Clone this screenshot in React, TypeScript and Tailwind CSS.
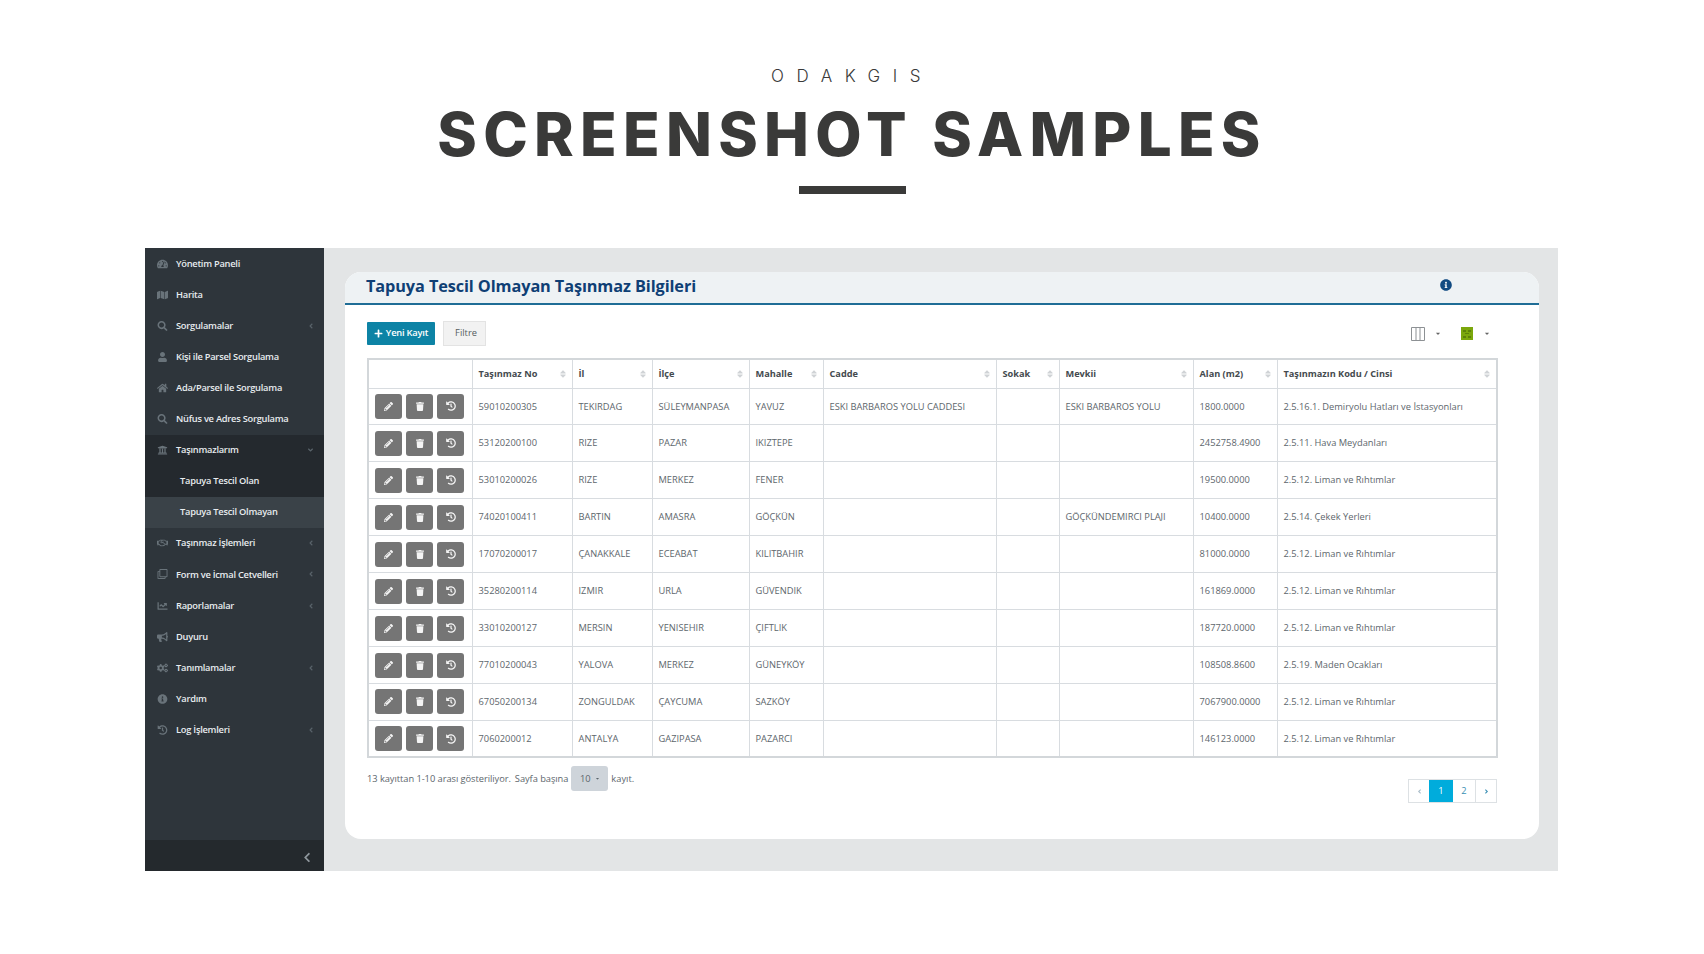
import {
  FaBullhorn,
  FaCaretDown,
  FaChartLine,
  FaChevronLeft,
  FaCogs,
  FaHistory,
  FaHome,
  FaInfoCircle,
  FaMap,
  FaPencilAlt,
  FaPlus,
  FaRegClone,
  FaRegHandshake,
  FaSearch,
  FaSort,
  FaTachometerAlt,
  FaTrash,
  FaUniversity,
  FaUser,
  FaAngleLeft,
  FaAngleDown,
  FaAngleRight,
} from "react-icons/fa";

const menu = [
  { label: "Yönetim Paneli", icon: FaTachometerAlt },
  { label: "Harita", icon: FaMap },
  { label: "Sorgulamalar", icon: FaSearch, arrow: true },
  { label: "Kişi ile Parsel Sorgulama", icon: FaUser },
  { label: "Ada/Parsel ile Sorgulama", icon: FaHome },
  { label: "Nüfus ve Adres Sorgulama", icon: FaSearch },
];

const menuBottom = [
  { label: "Taşınmaz İşlemleri", icon: FaRegHandshake, arrow: true },
  { label: "Form ve İcmal Cetvelleri", icon: FaRegClone, arrow: true },
  { label: "Raporlamalar", icon: FaChartLine, arrow: true },
  { label: "Duyuru", icon: FaBullhorn },
  { label: "Tanımlamalar", icon: FaCogs, arrow: true },
  { label: "Yardım", icon: FaInfoCircle },
  { label: "Log İşlemleri", icon: FaHistory, arrow: true },
];

const columns = [
  { label: "", width: "w-[104px]" },
  { label: "Taşınmaz No", width: "w-[100px]" },
  { label: "İl", width: "w-[80px]" },
  { label: "İlçe", width: "w-[97px]" },
  { label: "Mahalle", width: "w-[74px]" },
  { label: "Cadde", width: "w-[173px]" },
  { label: "Sokak", width: "w-[63px]" },
  { label: "Mevkii", width: "w-[134px]" },
  { label: "Alan (m2)", width: "w-[84px]" },
  { label: "Taşınmazın Kodu / Cinsi", width: "w-[220px]" },
];

const rows = [
  ["59010200305", "TEKIRDAG", "SÜLEYMANPASA", "YAVUZ", "ESKI BARBAROS YOLU CADDESI", "", "ESKI BARBAROS YOLU", "1800.0000", "2.5.16.1. Demiryolu Hatları ve İstasyonları"],
  ["53120200100", "RIZE", "PAZAR", "IKIZTEPE", "", "", "", "2452758.4900", "2.5.11. Hava Meydanları"],
  ["53010200026", "RIZE", "MERKEZ", "FENER", "", "", "", "19500.0000", "2.5.12. Liman ve Rıhtımlar"],
  ["74020100411", "BARTIN", "AMASRA", "GÖÇKÜN", "", "", "GÖÇKÜNDEMIRCI PLAJI", "10400.0000", "2.5.14. Çekek Yerleri"],
  ["17070200017", "ÇANAKKALE", "ECEABAT", "KILITBAHIR", "", "", "", "81000.0000", "2.5.12. Liman ve Rıhtımlar"],
  ["35280200114", "IZMIR", "URLA", "GÜVENDIK", "", "", "", "161869.0000", "2.5.12. Liman ve Rıhtımlar"],
  ["33010200127", "MERSIN", "YENISEHIR", "ÇIFTLIK", "", "", "", "187720.0000", "2.5.12. Liman ve Rıhtımlar"],
  ["77010200043", "YALOVA", "MERKEZ", "GÜNEYKÖY", "", "", "", "108508.8600", "2.5.19. Maden Ocakları"],
  ["67050200134", "ZONGULDAK", "ÇAYCUMA", "SAZKÖY", "", "", "", "7067900.0000", "2.5.12. Liman ve Rıhtımlar"],
  ["7060200012", "ANTALYA", "GAZIPASA", "PAZARCI", "", "", "", "146123.0000", "2.5.12. Liman ve Rıhtımlar"],
];

function MenuItem({ label, icon: Icon, arrow }: { label: string; icon: React.ComponentType<{ className?: string }>; arrow?: boolean }) {
  return (
    <div className="flex h-[31.1px] items-center pl-[12px] pr-[10px] text-[#e8ecef]">
      <span className="flex w-[19px] shrink-0 items-center">
        <Icon className="h-[10px] w-[11px] text-[#69737a]" />
      </span>
      <span className="flex-1 text-[9.3px] font-semibold tracking-[-0.25px]">{label}</span>
      {arrow && <FaAngleLeft className="h-[8px] w-[6px] text-[#59636a]" />}
    </div>
  );
}

function Sidebar() {
  return (
    <aside className="flex w-[179px] shrink-0 flex-col bg-[#2e353b]">
      <div className="flex-1">
        {menu.map((item) => (
          <MenuItem key={item.label} {...item} />
        ))}
        <div className="flex h-[31.1px] items-center bg-[#24292e] pl-[12px] pr-[10px] text-[#e8ecef]">
          <span className="flex w-[19px] shrink-0 items-center">
            <FaUniversity className="h-[10px] w-[11px] text-[#69737a]" />
          </span>
          <span className="flex-1 text-[9.3px] font-semibold tracking-[-0.25px]">Taşınmazlarım</span>
          <FaAngleDown className="h-[8px] w-[7px] text-[#59636a]" />
        </div>
        <div className="flex h-[31.1px] items-center bg-[#24292e] pl-[35px] text-[9.3px] font-semibold tracking-[-0.25px] text-[#e8ecef]">
          Tapuya Tescil Olan
        </div>
        <div className="flex h-[31.1px] items-center bg-[#3a4248] pl-[35px] text-[9.3px] font-semibold tracking-[-0.25px] text-[#e8ecef]">
          Tapuya Tescil Olmayan
        </div>
        {menuBottom.map((item) => (
          <MenuItem key={item.label} {...item} />
        ))}
      </div>
      <div className="flex h-[31px] items-center justify-end bg-[#24292d] pt-[3px] pr-[13px]">
        <FaChevronLeft className="h-[11px] w-[8px] text-[#8f979d]" />
      </div>
    </aside>
  );
}

function RowButton({ children }: { children: React.ReactNode }) {
  return (
    <span className="flex h-[25px] w-[27px] items-center justify-center rounded-[3px] bg-[#757575] text-[#f4f4f4]">
      {children}
    </span>
  );
}

function DataTable() {
  return (
    <table className="w-[1129px] table-fixed border-collapse border-2 border-[#d3d7da] text-[9.3px] text-[#5d666c]">
      <colgroup>
        {columns.map((c) => (
          <col key={c.label} className={c.width} />
        ))}
      </colgroup>
      <thead>
        <tr className="h-[29px]">
          {columns.map((c) => (
            <th key={c.label} className="border border-[#d8dce0] px-[6px] text-left text-[9.2px] font-bold text-[#444a4e]">
              {c.label && (
                <span className="flex items-center justify-between">
                  {c.label}
                  <FaSort className="h-[10px] w-[6px] text-[#d0d3d6]" />
                </span>
              )}
            </th>
          ))}
        </tr>
      </thead>
      <tbody>
        {rows.map((row) => (
          <tr key={row[0]} className="h-[36.95px]">
            <td className="border border-[#d8dce0] pl-[6px]">
              <span className="flex gap-[4px]">
                <RowButton>
                  <FaPencilAlt className="h-[9px] w-[9px]" />
                </RowButton>
                <RowButton>
                  <FaTrash className="h-[9px] w-[8px]" />
                </RowButton>
                <RowButton>
                  <FaHistory className="h-[10px] w-[10px]" />
                </RowButton>
              </span>
            </td>
            {row.map((cell, i) => (
              <td key={i} className="truncate border border-[#d8dce0] px-[6px]">
                {cell}
              </td>
            ))}
          </tr>
        ))}
      </tbody>
    </table>
  );
}

function ExcelIcon() {
  return (
    <svg viewBox="0 0 12 13" className="h-[13px] w-[12px]">
      <rect width="12" height="13" fill="#7ba70c" />
      <path d="M2 3h3v2H2zM7 3h3v2H7zM4 6h4v1H4zM2 9h3v2H2zM7 9h3v2H7z" fill="#5d8208" />
    </svg>
  );
}

export default function App() {
  return (
    <div className="min-h-[954px] bg-white font-['Open_Sans',sans-serif]">
      <header className="flex h-[248px] flex-col items-center pt-[66px]">
        <p className="font-['Inter',sans-serif] text-[17px] leading-[20px] font-light tracking-[12.5px] text-[#3a3a3a]">
          ODAKGIS
        </p>
        <h1 className="mt-[13px] font-['Inter',sans-serif] text-[60px] leading-[70px] font-extrabold tracking-[6.3px] text-[#3a3a39]">
          SCREENSHOT SAMPLES
        </h1>
        <div className="mt-[17px] h-[8px] w-[107px] bg-[#3a3a39]" />
      </header>

      <div className="mr-[146px] ml-[145px] flex h-[623px]">
        <Sidebar />
        <main className="flex-1 bg-[#e3e5e6] pt-[24px] pr-[19px] pl-[21px]">
          <section className="h-[567px] rounded-[16px] bg-white">
            <div className="flex h-[33px] items-center justify-between rounded-t-[16px] border-b-2 border-[#1f6d96] bg-[#eef2f4] pr-[87px] pb-[2px] pl-[21px]">
              <h2 className="text-[16.3px] font-bold tracking-[-0.1px] text-[#0f3f75]">
                Tapuya Tescil Olmayan Taşınmaz Bilgileri
              </h2>
              <FaInfoCircle className="mb-[3px] h-[12px] w-[12px] text-[#114b82]" />
            </div>

            <div className="flex items-center justify-between pt-[16px] pr-[49px] pl-[22px]">
              <div className="flex items-center gap-[8px]">
                <button className="flex h-[23px] w-[68px] items-center justify-center gap-[3px] rounded-[1px] bg-[#0d83a5] pb-[1px] text-[9.3px] font-semibold tracking-[-0.2px] text-white">
                  <FaPlus className="h-[9px] w-[9px]" />
                  Yeni Kayıt
                </button>
                <button className="h-[25px] w-[43px] border border-[#e3e3e3] bg-[#f2f2f2] pb-[1px] pl-[3px] text-[9.3px] font-normal text-[#555c60]">
                  Filtre
                </button>
              </div>
              <div className="flex items-center">
                <svg viewBox="0 0 14 14" className="h-[14px] w-[14px] text-[#8d9194]">
                  <path d="M.5.5h13v13H.5zM5 .5v13M9 .5v13" fill="none" stroke="currentColor" />
                </svg>
                <FaCaretDown className="ml-[10px] h-[7px] w-[6px] text-[#666]" />
                <span className="ml-[20px]">
                  <ExcelIcon />
                </span>
                <FaCaretDown className="ml-[11px] h-[7px] w-[6px] text-[#666]" />
              </div>
            </div>

            <div className="pt-[12px] pl-[22px]">
              <DataTable />
            </div>

            <div className="flex items-start justify-between pr-[42px] pl-[22px] text-[9.3px] text-[#5d666c]">
              <div className="flex items-center pt-[8px]">
                <span className="tracking-[-0.05px]">13 kayıttan 1-10 arası gösteriliyor.</span>
                <span className="ml-[4px] tracking-[-0.05px]">Sayfa başına</span>
                <span className="mx-[3px] flex h-[25px] w-[37px] items-center justify-center gap-[4px] rounded-[3px] bg-[#ced4da]">
                  10
                  <FaCaretDown className="h-[5px] w-[5px]" />
                </span>
                <span>kayıt.</span>
              </div>
              <div className="mt-[21px] flex h-[24px] items-stretch border border-[#dde1e4] text-[#3b8fb4]">
                <span className="flex w-[20px] items-center justify-center">
                  <FaAngleLeft className="h-[7px] w-[5px] text-[#a9bcc8]" />
                </span>
                <span className="flex w-[24px] items-center justify-center bg-[#00acdc] text-white">1</span>
                <span className="flex w-[23px] items-center justify-center border-r border-[#dde1e4]">2</span>
                <span className="flex w-[20px] items-center justify-center">
                  <FaAngleRight className="h-[7px] w-[5px]" />
                </span>
              </div>
            </div>
          </section>
        </main>
      </div>
    </div>
  );
}
